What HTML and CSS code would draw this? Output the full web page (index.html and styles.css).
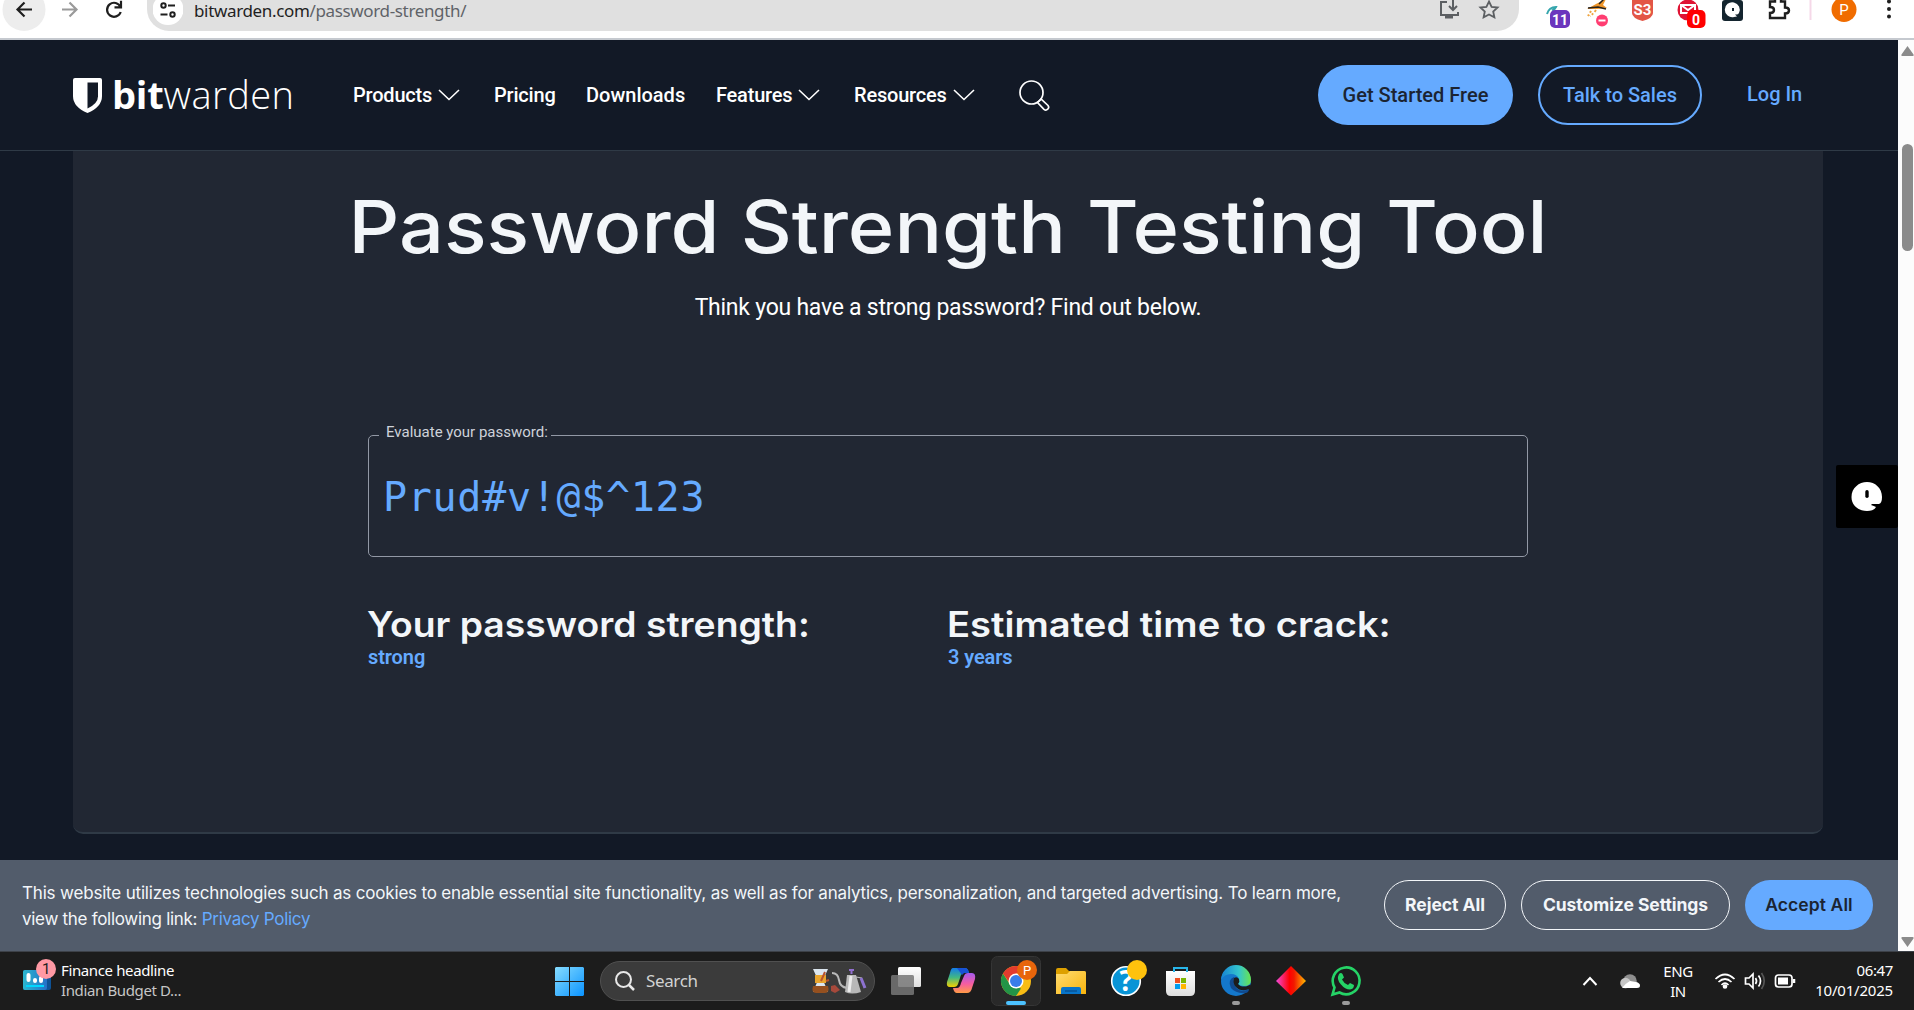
FILE: index.html
```html
<!DOCTYPE html>
<html lang="en">
<head>
<meta charset="utf-8">
<title>Password Strength Testing Tool | Bitwarden</title>
<link rel="stylesheet" href="styles.css">
</head>
<body>
<header class="toolbar">
  <svg class="nav-icons" width="147" height="38" fill="none" stroke-width="2.2">
    <circle cx="24" cy="9.500" r="21.500" fill="#ededed"/>
    <path d="M32 9.500H18M24.500 2.500l-7 7 7 7" stroke="#1f1f1f"/>
    <path d="M62 9.500h14M69.500 2.500l7 7-7 7" stroke="#9a9a9a"/>
    <path d="M120.500 7a7 7 0 1 0 .2 5M121 .8v6.500h-6.500" stroke="#1f1f1f"/>
  </svg>
  <div class="omnibox">
    <svg class="site-info" width="30" height="31" fill="none" stroke="#1f1f1f" stroke-width="2"><circle cx="15" cy="9.500" r="15.500" fill="#fff" stroke="none"/><circle cx="10.500" cy="5.500" r="2.200"/><path d="M15 5.500h7M7.500 14.500h7"/><circle cx="19.500" cy="14.500" r="2.200"/></svg>
    <span class="url">bitwarden.com<span class="path">/password-strength/</span></span>
    <svg class="omni-actions" width="64" height="30" fill="none" stroke="#5c5f62" stroke-width="2"><path d="M10 2H4v13h17v-3M16 0v9M12 6l4 4 4-4"/><path d="M8 17h8" stroke-width="3"/><path d="M52 1.500l2.600 5.300 6 .7-4.400 4 1.200 5.800L52 14.500l-5.400 2.800 1.200-5.800-4.400-4 6-.7z" stroke-width="1.800"/></svg>
  </div>
  <svg class="extensions" width="395" height="38">
    <path d="M28 14q2-7 9-7-1 2-3 3l4 4" fill="none" stroke="#35a6ad" stroke-width="2"/><rect x="31" y="10" width="20" height="18" rx="5" fill="#6b35bd"/><text x="41" y="25" class="badge-text">11</text>
    <path d="M68 9L77 4l10-5-3 6 4 3-10 1z" fill="#ef962a"/><path d="M69 8l10-1 8 2M80 4l5-5" stroke="#26221e" stroke-width="1.500" fill="none"/><path d="M77 10q-3 4-6 6M72 11l-3 5" stroke="#efa43f" stroke-width="2" stroke-dasharray="2 2" fill="none"/><circle cx="83" cy="20.500" r="6" fill="#ff3d71"/><path d="M79.500 20.500h7" stroke="#fff" stroke-width="2"/>
    <path d="M113-2h21v15q0 5-10.500 8-10.500-3-10.500-8z" fill="#e35646"/><text x="123.500" y="15" class="s3">S3</text>
    <circle cx="169" cy="10" r="10.500" fill="#df1434"/><path d="M162 5h14v8h-14zl7 5 7-5" fill="#df1434" stroke="#fff" stroke-width="2"/><rect x="168" y="10" width="18.500" height="18" rx="5" fill="#f00"/><text x="177" y="25" class="badge-text">0</text>
    <rect x="203" y="0" width="21" height="21" rx="3" fill="#14252f"/><path d="M215 17a7.500 7.500 0 1 1 5-4q-1 2-4 1.500l2 2z" fill="#fff"/><path d="M214 8v3" stroke="#14252f" stroke-width="2"/>
    <path d="M251 1.500h5V-2h6v3.500h4v6q4 0 4 3t-4 3V18h-15v-5q4 0 4-3t-4-3z" fill="none" stroke="#1f1f1f" stroke-width="2.400"/>
    <path d="M291.500 0v20" stroke="#f5d8e8" stroke-width="2"/><circle cx="325" cy="9.500" r="12.500" fill="#f06c00"/><text x="325" y="15" class="avatar">P</text>
    <g fill="#1f1f1f"><circle cx="370" cy="1.500" r="2"/><circle cx="370" cy="9" r="2"/><circle cx="370" cy="16.500" r="2"/></g>
  </svg>
</header>

<div class="viewport">
  <div class="page">
    <nav class="site-nav">
      <a class="logo"><svg width="29" height="35" viewBox="0 0 29 35"><path d="M2 0h25q2 0 2 2v16q0 11-14.500 17Q0 29 0 18V2q0-2 2-2z" fill="#fff"/><path d="M14.500 4.500H25v14q0 7-10.500 12z" fill="#121926"/></svg><b>bit</b><span>warden</span></a>
      <a class="item products"><span>Products</span><svg width="22" height="12" class="chev"><path d="M1 1l10 9.500L21 1"/></svg></a>
      <a class="item pricing"><span>Pricing</span></a>
      <a class="item downloads"><span>Downloads</span></a>
      <a class="item features"><span>Features</span><svg width="22" height="12" class="chev"><path d="M1 1l10 9.500L21 1"/></svg></a>
      <a class="item resources"><span>Resources</span><svg width="22" height="12" class="chev"><path d="M1 1l10 9.500L21 1"/></svg></a>
      <svg class="nav-search" width="31" height="31" fill="none" stroke="#fff" stroke-width="1.700"><circle cx="12.500" cy="12.500" r="11.500"/><path d="M18.500 22.500l3.500-3.500 7 6.500q1.500 2-.3 3.700t-3.700.1z"/></svg>
      <a class="pill solid"><span>Get Started Free</span></a>
      <a class="pill outline"><span>Talk to Sales</span></a>
      <a class="login"><span>Log In</span></a>
    </nav>
    <main class="content">
      <section class="card">
        <h1>Password Strength Testing Tool</h1>
        <p class="lead">Think you have a strong password? Find out below.</p>
        <fieldset class="field"><legend>Evaluate your password:</legend><span class="password">Prud#v!@$^123</span></fieldset>
        <div class="results">
          <div><h2>Your password strength:</h2><p>strong</p></div>
          <div><h2 class="crack">Estimated time to crack:</h2><p>3 years</p></div>
        </div>
      </section>
    </main>
    <aside class="cookies">
      <p><span class="line">This website utilizes technologies such as cookies to enable essential site functionality, as well as for analytics, personalization, and targeted advertising. To learn more,</span><br>view the following link: <a>Privacy Policy</a></p>
      <button class="reject">Reject All</button><button class="custom">Customize Settings</button><button class="accept">Accept All</button>
    </aside>
    <div class="side-tab"><svg width="32" height="32" viewBox="0 0 32 32"><path d="M31 16C31 7 24 1 16 1S.5 7 .5 16 8 30 16 30q7 0 9-4-2-1-5-2l1-1h7q3-1 3-7z" fill="#fff"/><rect x="14.300" y="9" width="3.400" height="8" rx="1.700"/></svg></div>
  </div>
  <svg class="scrollbar" width="16" height="911"><path d="M9.500 6l6 8.500q.5 1.500-1 1.500h-10q-1.500 0-1-1.500zM9.500 907l6-8.500q.5-1.500-1-1.500h-10q-1.500 0-1 1.500z" fill="#8b8b8b"/><rect x="4" y="104" width="11" height="107" rx="5.500" fill="#8b8b8b"/></svg>
</div>

<footer class="taskbar">
  <svg class="widget" width="35" height="40"><defs><linearGradient id="wg"><stop stop-color="#2bb7cf"/><stop offset="1" stop-color="#2470c8"/></linearGradient></defs><rect x="0" y="12" width="28" height="20" rx="2" fill="#0e5296"/><rect x="0" y="12" width="24" height="20" rx="2" fill="url(#wg)"/><path d="M5.500 17v5M12 22v1M18 20v3" stroke="#fff" stroke-width="4" stroke-linecap="round"/><path d="M3 28h18" stroke="#00d7ff" stroke-width="2"/><circle cx="23" cy="11" r="10" fill="#ff99a4"/><text x="23" y="16" class="one">1</text></svg>
  <div class="news"><div>Finance headline</div><div class="dim">Indian Budget D...</div></div>
  <svg class="start" width="29" height="29"><defs><linearGradient id="win" x2="1" y2="1"><stop stop-color="#86dcff"/><stop offset="1" stop-color="#0a93ff"/></linearGradient></defs><path d="M1 0h13v14H0V1zM15 0h13l1 1v13H15zM0 15h14v14H1l-1-1zM15 15h14v13l-1 1H15z" fill="url(#win)"/></svg>
  <div class="search"><svg width="20" height="20" fill="none" stroke="#e8e8e8" stroke-width="2"><circle cx="8.500" cy="8.500" r="7.500"/><path d="M14 14l5 5" stroke-width="2.500"/></svg><span>Search</span>
    <svg class="coffee" width="56" height="26"><path d="M2 1h15l-5 11 5 12H2L7 12z" fill="#dce6ef"/><path d="M4 7h11v8H4z" fill="#e9a52e"/><path d="M2 18h15q2 7-3 7H5q-5 0-3-7z" fill="#95501f"/><path d="M14 4l-4 9M18 12l-3 1" stroke="#b9532c" stroke-width="2"/><path d="M20 18l4-1 5 5-5 3-4-2z" fill="#a6493b"/><path d="M21 5q6 0 7 7t8 8" fill="none" stroke="#b9b9b9" stroke-width="2"/><path d="M36 7h9l5 17q-9 3-16 0z" fill="#b8b8b8"/><path d="M40 8l-2 16" stroke="#ececec" stroke-width="3"/><path d="M38 2h5M40.500 2v4" stroke="#9270d0" stroke-width="2"/><path d="M45 9l6 1" stroke="#bbb"/><path d="M50 10l4 10" stroke="#8d72d0" stroke-width="3"/></svg></div>
  <svg class="apps" width="480" height="58" viewBox="886 952 480 58">
    <defs><linearGradient id="fold" x2="1" y2="1"><stop stop-color="#ffdc72"/><stop offset="1" stop-color="#f9b40c"/></linearGradient><linearGradient id="edge" x2="1"><stop stop-color="#1683d5"/><stop offset=".6" stop-color="#34c5cc"/><stop offset="1" stop-color="#69e44d"/></linearGradient><linearGradient id="dia"><stop stop-color="#f34bdc"/><stop offset=".45" stop-color="#f00"/><stop offset=".6" stop-color="#f21800"/><stop offset="1" stop-color="#ffbc00"/></linearGradient><linearGradient id="cpl" y2="1" x2="0"><stop stop-color="#137bea"/><stop offset=".5" stop-color="#42b883"/><stop offset="1" stop-color="#f4d000"/></linearGradient><linearGradient id="cpr" y2="1" x2="0"><stop stop-color="#a45af0"/><stop offset=".55" stop-color="#f65da0"/><stop offset="1" stop-color="#ff9b45"/></linearGradient><linearGradient id="gw" y2="1" x2="0"><stop stop-color="#fff"/><stop offset="1" stop-color="#dedede"/></linearGradient></defs>
    <rect x="898" y="967" width="23" height="20" rx="1.500" fill="url(#gw)"/><rect x="891" y="975" width="23" height="20" rx="1.500" fill="#777" opacity=".85"/>
    <path d="M953 968h12q3 0 4 5h-5q-3 0-4 5l-2 6q-1 3-4 3h-4q-4 0-3-5l3-9q1-5 3-5z" fill="url(#cpl)"/><path d="M968 973h4q4 0 3 6l-3 9q-1 5-5 5h-10q-3 0-4-5h4q3 0 4-5l3-7q1-3 4-3z" fill="url(#cpr)"/><path d="M957 968h8q3 0 4 5h-5l-2 2z" fill="#1752d5"/>
    <rect x="991.500" y="956.500" width="49" height="49" rx="6" fill="#292929" stroke="#353535"/>
    <circle cx="1016" cy="981" r="15" fill="#f9bd15"/><path d="M1003 973.500l7 11 11 4-5 7.500a15 15 0 0 1-13-22.500z" fill="#239447"/><path d="M1003 973.500a15 15 0 0 1 26 0h-13l-6 10z" fill="#e33b2e"/><circle cx="1016" cy="981" r="7.500" fill="#fff"/><circle cx="1016" cy="981" r="6" fill="#397de9"/><circle cx="1027" cy="970" r="10" fill="#e8650b"/><text x="1027" y="975" class="p">P</text><rect x="1006" y="1001" width="20" height="4" rx="2" fill="#4cc2ff"/>
    <path d="M1056 970q0-2 2-2h8l3 3h15q2 0 2 2v20h-30z" fill="#dda000"/><path d="M1056 974h11l3-3h14q2 0 2 2v21h-30z" fill="url(#fold)"/><path d="M1061 994v-5q0-2 2-2h16q2 0 2 2v5z" fill="#0874c9"/><path d="M1065 991h12" stroke="#06437d"/>
    <circle cx="1126" cy="981" r="14.300" fill="#0894d6" stroke="#fff" stroke-width="1.600"/><text x="1126" y="991" class="help">?</text><circle cx="1137" cy="970" r="10" fill="#ffc20d"/>
    <path d="M1166 971h29v20q0 5-5 5h-19q-5 0-5-5z" fill="url(#gw)"/><path d="M1174 972v-4h13v4" fill="none" stroke="#28b5e9" stroke-width="2"/><path d="M1175 978h5v5h-5z" fill="#ef4f20"/><path d="M1181 978h5v5h-5z" fill="#7bb700"/><path d="M1175 984h5v5h-5z" fill="#009df0"/><path d="M1181 984h5v5h-5z" fill="#ffb500"/>
    <circle cx="1236" cy="981" r="15" fill="#1478cc"/><path d="M1221 980a15 15 0 0 1 30 0q0 6-7 6-4 0-6-2 2-2 1-5-2-5-8-5-7 0-10 6z" fill="url(#edge)"/><path d="M1234 977q-7 3-3 11 5 6 15 5 3-1 3-4-5 3-10 1-6-3-4-9z" fill="#104a8f"/><path d="M1234 978q3-2 5 1 1 3-1 5 2 3 8 2.500l5-2-1 4q-5 3-11 1-7-4-5-11.500z" fill="#1c1c1c"/>
    <path d="M1291 966l15 15-15 14.500-15-14.500z" fill="url(#dia)"/>
    <path d="M1332.500 994.500l2-7a13.400 13.400 0 1 1 5 5z" fill="#1c1c1c" stroke="#25d366" stroke-width="2.600"/><path d="M1339 974q2-2 3.500 0l1.500 3.500-2 2q2 4 6 5.500l2-2 4 2q0 4-4 4.500-5 0-9-5-5-5-2-10.500z" fill="#25d366"/>
    <rect x="1232" y="1001" width="8" height="4" rx="2" fill="#9a9a9a"/><rect x="1342" y="1001" width="8" height="4" rx="2" fill="#9a9a9a"/>
  </svg>
  <svg class="tray" width="62" height="58" viewBox="1580 952 62 58"><path d="M1583.500 985l6.500-7 6.500 7" fill="none" stroke="#fff" stroke-width="2"/><circle cx="1630" cy="981" r="6.800" fill="#8e8e8e"/><circle cx="1625.500" cy="983" r="5.300" fill="#c5c5c5"/><path d="M1622 988q4-5 8-7l6 1q4 1 4 3.500t-3 2.500z" fill="#fff"/></svg>
  <div class="lang"><div>ENG</div><div>IN</div></div>
  <svg class="status" width="82" height="58" viewBox="1714 952 82 58" fill="none" stroke="#fff" stroke-width="1.700"><path d="M1715.500 979q9.500-9 19 0M1718.500 982q6.500-6 13 0M1721.500 985q3.500-3.500 7 0"/><circle cx="1725" cy="986.500" r="1.500" fill="#fff"/><path d="M1745.500 978h3.500l4-4v14l-4-4h-3.500zM1755.500 978q2 3 0 6M1758.500 975.500q4 5.500 0 11"/><path d="M1761.500 973q5.500 8 0 16" stroke="#555"/><rect x="1775.500" y="975" width="16.500" height="12" rx="3"/><rect x="1778" y="977.500" width="10" height="7" fill="#fff" stroke="none"/><path d="M1794 979v4" stroke-width="2.500"/></svg>
  <div class="clock"><div>06:47</div><div class="date">10/01/2025</div></div>
</footer>
</body>
</html>
```
FILE: styles.css
```css
* { box-sizing: border-box; }
body { margin: 0; width: 1914px; height: 1010px; overflow: hidden; background: #1c1c1c; font-family: Roboto, sans-serif; }
svg { display: block; flex: none; overflow: hidden; }
p, h1, h2 { margin: 0; font-weight: 400; }
span, a, h1, h2 { white-space: nowrap; }

.toolbar { display: flex; height: 40px; background: #fff; border-bottom: 2px solid #c5c9cf; }
.omnibox { display: flex; width: 1372px; height: 31px; padding-left: 6px; background: #e0e0e0; border-radius: 0 0 22px 22px; }
.url { width: 1206px; margin-left: 11px; font: 17px/21px "Noto Sans", sans-serif; letter-spacing: -0.35px; color: #1f1f1f; }
.url .path { color: #5f6368; }
.omni-actions { margin-left: 37px; }
.badge-text { font: 700 14px Roboto, sans-serif; fill: #fff; text-anchor: middle; }
.s3 { font: 700 15px Roboto, sans-serif; fill: #fff; text-anchor: middle; }
.avatar { font: 15px Roboto, sans-serif; fill: #fff; text-anchor: middle; }

.viewport { display: flex; height: 911px; }
.page { position: relative; display: flex; flex-direction: column; width: 1898px; background: #121926; }
.scrollbar { background: #fcfcfc; }

.site-nav { display: flex; align-items: center; flex: none; height: 111px; padding-left: 73px; border-bottom: 1px solid #2f3a46; color: #fff; font-size: 20px; font-weight: 500; }
.logo { display: flex; align-items: center; width: 280px; font: 300 38px/54px "Open Sans", sans-serif; letter-spacing: 0.4px; }
.logo b { margin-left: 10px; font-weight: 700; letter-spacing: -0.2px; }
.logo b, .logo span { margin-top: -2px; }
.item { display: flex; align-items: center; gap: 6px; letter-spacing: -0.2px; }
.products { width: 141px; }
.pricing { width: 92px; }
.downloads { width: 130px; letter-spacing: 0; }
.features { width: 138px; }
.resources { width: 165px; }
.chev { fill: none; stroke: #fff; stroke-width: 1.6; }
.pill { display: flex; align-items: center; justify-content: center; height: 60px; border-radius: 30px; }
.solid { width: 195px; margin-left: 268px; background: #65aaff; color: #1b2432; }
.outline { width: 164px; margin-left: 25px; border: 2px solid #65aaff; color: #65aaff; }
.login { margin: -2px 0 0 45px; color: #65aaff; }

.content { flex: none; height: 709px; padding: 0 75px 0 73px; }
.card { height: 683px; padding: 34px 295px 0; background: #212733; border-bottom: 2px solid #2f3a46; border-radius: 0 0 10px 10px; }
h1 { height: 90px; margin: 0; font: 500 73px/84px Inter, sans-serif; color: #f3f6f9; text-align: center; transform: scaleX(1.085); }
.lead { margin-top: 19px; font-size: 23px; letter-spacing: -0.25px; line-height: 28px; color: #fff; text-align: center; }
.field { display: block; height: 132px; min-width: 0; margin: 103px 0 0; padding: 29px 16px 0 14px; border: 1px solid #9298a5; border-radius: 5px; }
legend { height: 20px; margin-left: -4px; padding: 0 3px 0 7px; font-size: 15px; line-height: 15px; color: #ced2da; }
.password { display: block; font: 40px/47px "DejaVu Sans Mono", monospace; letter-spacing: 0.7px; color: #65aaff; }
.results { display: grid; grid-template-columns: 580px 1fr; margin-top: 45px; }
h2 { height: 43px; margin-left: -1px; font: 600 35px/44px Inter, sans-serif; color: #f3f6f9; transform: scaleX(1.066); transform-origin: 0 0; }
.crack { transform: scaleX(1.09); }
.results p { font-size: 20px; font-weight: 600; letter-spacing: -0.1px; line-height: 24px; color: #65aaff; }

.cookies { display: flex; flex: none; height: 91px; padding: 20px 0 0 22px; background: #525c6b; color: #f3f6f9; font: 17px/26px Inter, sans-serif; letter-spacing: -0.29px; }
.cookies p { width: 1362px; }
.cookies .line { letter-spacing: -0.18px; }
.cookies a { color: #65aaff; }
button { height: 50px; padding: 0 0 2px; border: 1px solid #f3f6f9; border-radius: 25px; background: none; color: #f3f6f9; font: 700 17.5px Inter, sans-serif; letter-spacing: -0.05px; }
.reject { width: 122px; }
.custom { width: 209px; margin-left: 15px; }
.accept { width: 128px; margin-left: 15px; border: 0; background: #65aaff; color: #1b2432; font-weight: 600; letter-spacing: 0.1px; }
.side-tab { position: absolute; right: 0; top: 425px; display: grid; place-items: center; width: 62px; height: 63px; border-radius: 2px; background: #000; }

.taskbar { display: flex; height: 59px; padding-left: 23px; border-top: 1px solid #3d4148; background: #1c1c1c; color: #fff; font: 15px/20px "Noto Sans", sans-serif; letter-spacing: -0.37px; }
.widget { margin-top: 6px; }
.news { width: 494px; padding: 8px 0 0 3px; }
.dim { color: #c6c6c6; }
.one { font: 15px Roboto, sans-serif; fill: #222; text-anchor: middle; }
.start { margin: 15px 16px 0 3px; }
.search { display: flex; align-items: center; width: 275px; height: 40px; margin-top: 9px; padding-left: 14px; border: 1px solid #505050; border-radius: 20px; background: #3b3b3b; color: #d2d2d2; font-size: 17px; }
.search span { width: 165px; margin-left: 11px; }
.apps { margin-left: 11px; }
.p { font: 13px Roboto, sans-serif; fill: #fff; text-anchor: middle; }
.help { font: 700 28px "Open Sans", sans-serif; fill: #fff; text-anchor: middle; }
.tray { margin-left: 214px; }
.lang { width: 36px; margin: 9px 18px 0 18px; text-align: center; }
.clock { width: 97px; padding-top: 8px; text-align: right; }
.date { letter-spacing: -0.2px; }
```
